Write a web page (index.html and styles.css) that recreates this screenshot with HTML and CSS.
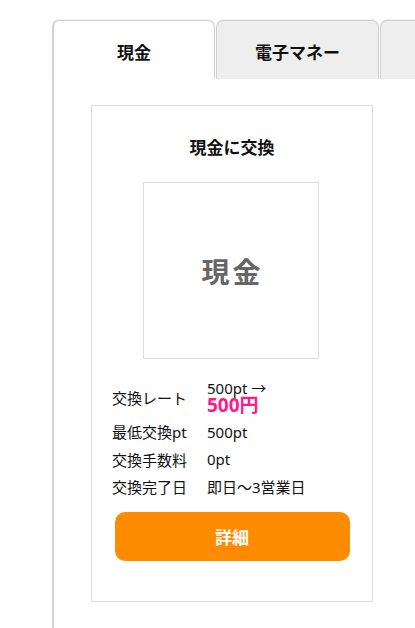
FILE: index.html
```html
<!DOCTYPE html>
<html lang="ja">
<head>
<meta charset="utf-8">
<link rel="stylesheet" href="styles.css">
</head>
<body>
<div class="page">
  <div class="tabs">
    <div class="tab active">現金</div>
    <div class="tab">電子マネー</div>
    <div class="tab">ギフト券</div>
  </div>
  <div class="panel">
    <div class="card">
      <h2 class="card-title">現金に交換</h2>
      <div class="thumb">現金</div>
      <div class="info">
        <div class="row first">
          <div class="label">交換レート</div>
          <div class="value"><span class="from">500pt →</span><span class="to">500円</span></div>
        </div>
        <div class="row">
          <div class="label">最低交換pt</div>
          <div class="value">500pt</div>
        </div>
        <div class="row">
          <div class="label">交換手数料</div>
          <div class="value">0pt</div>
        </div>
        <div class="row">
          <div class="label">交換完了日</div>
          <div class="value">即日〜3営業日</div>
        </div>
      </div>
      <button class="btn">詳細</button>
    </div>
  </div>
</div>
</body>
</html>
```

FILE: styles.css
```css
html, body {
  margin: 0;
  padding: 0;
  background: #fff;
  overflow: hidden;
}
body {
  font-family: "Noto Sans", "Noto Sans CJK JP", sans-serif;
  color: #111;
}
.page {
  padding: 20px 0 0 52px;
  width: 560px;
}
.tabs {
  display: flex;
  gap: 1px;
}
.tab {
  width: 163px;
  height: 59px;
  flex: none;
  box-sizing: border-box;
  border: 1px solid #d0d0d0;
  border-bottom: none;
  border-radius: 7px 7px 0 0;
  background: #eeeeee;
  display: flex;
  align-items: center;
  justify-content: center;
  padding-top: 2px;
  font-size: 17px;
  font-weight: 700;
  box-shadow: 0 -1px 1px rgba(0,0,0,0.06);
}
.tab.active {
  background: #fff;
  border-left: 2px solid #d0d0d0;
}
.panel {
  border-left: 2px solid #d5d5d5;
  padding: 26px 0 40px 37px;
  height: 600px;
}
.card {
  width: 282px;
  box-sizing: border-box;
  border: 1px solid #dddddd;
  padding: 29px 0 40px;
  display: flex;
  flex-direction: column;
  align-items: center;
}
.card-title {
  margin: 0;
  font-size: 17px;
  line-height: 25px;
  font-weight: 700;
}
.thumb {
  margin-top: 22px;
  margin-right: 2px;
  width: 176px;
  height: 177px;
  box-sizing: border-box;
  border: 1px solid #dddddd;
  display: flex;
  align-items: center;
  justify-content: center;
  font-size: 28px;
  font-weight: 700;
  letter-spacing: 3px;
  padding-left: 3px;
  color: #666;
}
.info {
  align-self: stretch;
  margin-top: 21px;
  padding-left: 20px;
  display: flex;
  flex-direction: column;
}
.row {
  display: flex;
  align-items: center;
  height: 27.5px;
  font-size: 15px;
}
.row.first {
  height: 35px;
  margin-bottom: 3px;
}
.label {
  width: 95px;
  flex: none;
}
.value {
  display: flex;
  flex-direction: column;
}
.from {
  line-height: 16px;
}
.to {
  color: #ff1a8a;
  font-size: 19px;
  font-weight: 700;
  line-height: 19px;
}
.btn {
  margin-top: 11px;
  width: 235px;
  height: 49px;
  border: none;
  border-radius: 10px;
  background: #ff8c00;
  color: #fff;
  font-family: inherit;
  font-size: 17px;
  font-weight: 700;
}
```
